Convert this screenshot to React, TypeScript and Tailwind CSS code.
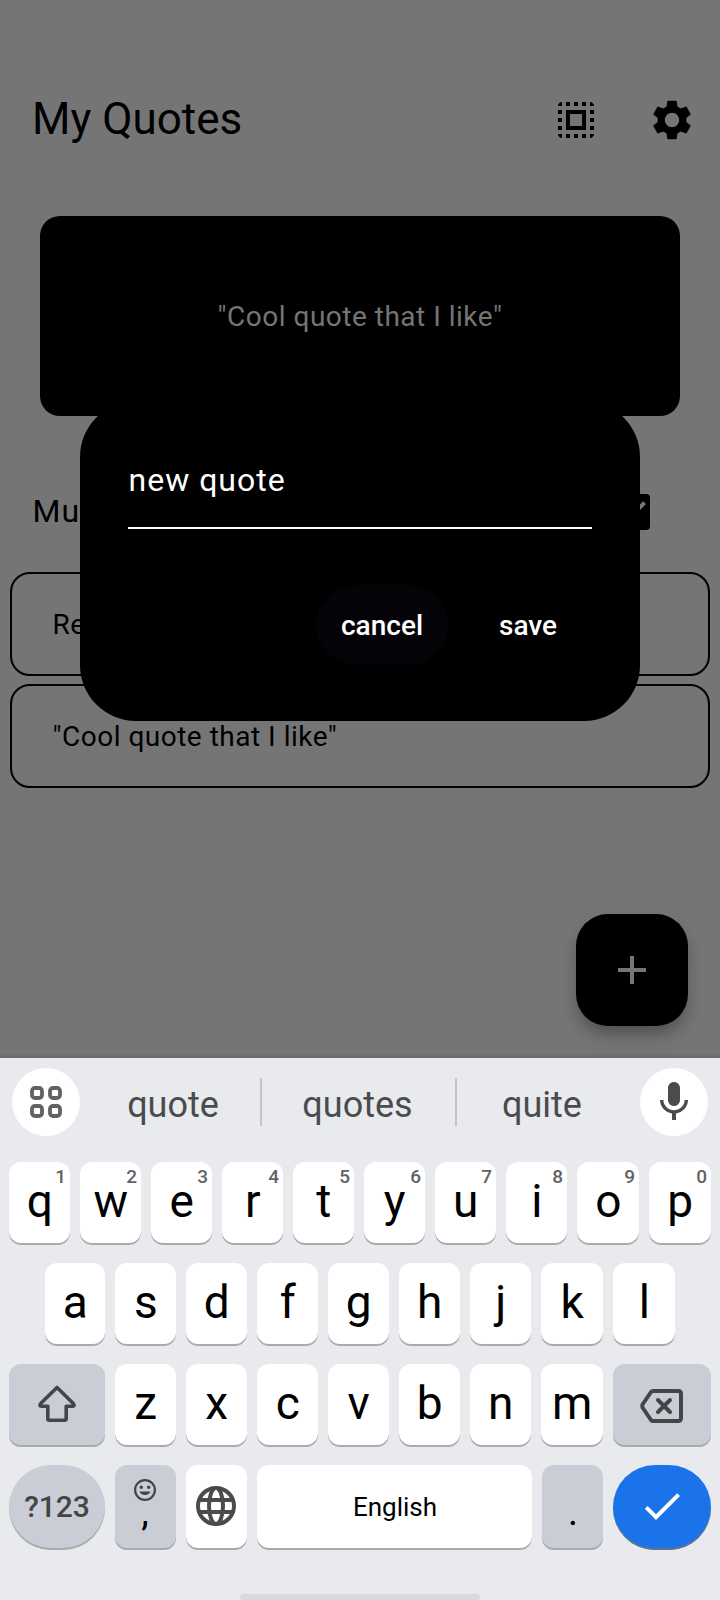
import React from "react";
import { MdAdd, MdCheck, MdCheckBox, MdMic, MdSelectAll, MdSettings } from "react-icons/md";

const KEY = "relative flex shrink-0 justify-center rounded-[12px] shadow-[inset_0_-2px_0_#a9aaad]";

function Key({ label, hint, width = "w-[61px]" }: { label: string; hint?: string; width?: string }) {
  return (
    <div className={`${KEY} ${width} h-[83px] bg-white pl-[0.5px] text-[46px] leading-[78px] text-black`}>
      {label}
      {hint && (
        <span className="absolute right-[4px] top-[5px] text-[19px] font-medium leading-[20px] text-[#626262]">{hint}</span>
      )}
    </div>
  );
}

function ShiftIcon() {
  return (
    <svg width="44" height="43" viewBox="0 0 44 43" fill="none" stroke="#444546" strokeWidth="3.6" strokeLinejoin="round">
      <path d="M22 3.500 L38.300 19.500 Q40.200 22.200 37.500 22.300 H31.200 V34.500 Q31.200 36.200 29.500 36.200 H14.500 Q12.800 36.200 12.800 34.500 V22.300 H6.500 Q3.800 22.200 5.700 19.500 Z" />
    </svg>
  );
}

function BackspaceIcon() {
  return (
    <svg width="48" height="40" viewBox="0 0 48 40" fill="none" stroke="#444546" strokeWidth="4" strokeLinejoin="round">
      <path d="M15 5 H40 Q43 5 43 8 V32 Q43 35 40 35 H15 Q14 35 13 34 L4.500 21.500 Q4 20 4.500 18.500 L13 6 Q14 5 15 5 Z" />
      <path d="M20 14 L32 26 M32 14 L20 26" strokeLinecap="round" />
    </svg>
  );
}

function GridIcon() {
  return (
    <svg width="32" height="32" viewBox="0 0 32 32" fill="none" stroke="#626262" strokeWidth="3.8">
      <rect x="2" y="2" width="10" height="10" rx="3" />
      <rect x="20" y="2" width="10" height="10" rx="3" />
      <rect x="2" y="20" width="10" height="10" rx="3" />
      <rect x="20" y="20" width="10" height="10" rx="3" />
    </svg>
  );
}

function GlobeIcon() {
  return (
    <svg width="40" height="40" viewBox="0 0 40 40" fill="none" stroke="#4a4b4b" strokeWidth="4">
      <circle cx="20" cy="20" r="18" />
      <ellipse cx="20" cy="20" rx="7" ry="18" />
      <path d="M3.500 14 H36.500 M3.500 26 H36.500" />
    </svg>
  );
}

function SmileIcon() {
  return (
    <svg width="22" height="22" viewBox="0 0 22 22" fill="none">
      <circle cx="11" cy="11" r="9.900" stroke="#444546" strokeWidth="2.200" />
      <circle cx="7.300" cy="8.200" r="1.700" fill="#444546" />
      <circle cx="14.700" cy="8.200" r="1.700" fill="#444546" />
      <path d="M5.500 12.500 H16.500 A5.800 5 0 0 1 5.500 12.500 Z" fill="#444546" />
    </svg>
  );
}

const ROW1 = ["q", "w", "e", "r", "t", "y", "u", "i", "o", "p"];
const ROW2 = ["a", "s", "d", "f", "g", "h", "j", "k", "l"];
const ROW3 = ["z", "x", "c", "v", "b", "n", "m"];

function Keyboard() {
  return (
    <div className="relative h-[542px] bg-[#e8eaed]">
      <div className="flex h-[104px] items-start px-3 pt-[10px]">
        <div className="flex h-[68px] w-[68px] items-center justify-center rounded-full bg-white">
          <GridIcon />
        </div>
        <div className="flex h-[68px] flex-1 items-center text-[36px] text-[#4a4b4d]">
          <div className="w-[180px] pl-[6px] pt-[5px] text-center">quote</div>
          <div className="h-12 w-[2px] bg-[#c4c5c8]" />
          <div className="w-[193px] pr-[2px] pt-[5px] text-center">quotes</div>
          <div className="h-12 w-[2px] bg-[#c4c5c8]" />
          <div className="w-[171px] pr-[1px] pt-[5px] text-center">quite</div>
        </div>
        <div className="flex h-[68px] w-[68px] items-center justify-center rounded-full bg-white">
          <MdMic size={48} color="#4a4b4b" />
        </div>
      </div>
      <div className="flex flex-col gap-[18px] px-[9px]">
        <div className="flex gap-[10px]">
          {ROW1.map((k, i) => (
            <Key key={k} label={k} hint={String((i + 1) % 10)} width={i > 7 ? "w-[62px]" : "w-[61px]"} />
          ))}
        </div>
        <div className="flex gap-[10px] pl-9">
          {ROW2.map((k, i) => (
            <Key key={k} label={k} width={i === 0 ? "w-[60px]" : i > 6 ? "w-[62px]" : "w-[61px]"} />
          ))}
        </div>
        <div className="flex gap-[10px]">
          <div className={`${KEY} h-[83px] w-[96px] items-center bg-[#cacdd6]`}>
            <ShiftIcon />
          </div>
          {ROW3.map((k, i) => (
            <Key key={k} label={k} width={i === 6 ? "w-[62px]" : "w-[61px]"} />
          ))}
          <div className={`${KEY} h-[83px] w-[98px] items-center bg-[#cacdd6]`}>
            <BackspaceIcon />
          </div>
        </div>
        <div className="flex gap-[10px]">
          <div className="h-[85px] w-[96px] rounded-[42px] bg-[#cacdd6] text-center text-[30px] font-medium leading-[84px] text-[#444546] shadow-[inset_0_-2px_0_#a9aaad]">
            ?123
          </div>
          <div className="flex h-[85px] w-[61px] flex-col items-center rounded-[12px] bg-[#cacdd6] pr-px pt-[14px] shadow-[inset_0_-2px_0_#a9aaad]">
            <SmileIcon />
            <span className="text-[38px] leading-[22px]">,</span>
          </div>
          <div className={`${KEY} h-[85px] w-[61px] items-center bg-white pb-[3px] pr-px`}>
            <GlobeIcon />
          </div>
          <div className={`${KEY} h-[85px] w-[275px] bg-white pl-px text-[26px] leading-[84px]`}>English</div>
          <div className={`${KEY} h-[85px] w-[61px] bg-[#cacdd6] pl-px text-[38px] leading-[94px]`}>.</div>
          <div className="flex h-[85px] w-[98px] items-center justify-center rounded-[42px] bg-[#1a73e8] pb-[3px] shadow-[inset_0_-2px_0_#5d7594]">
            <MdCheck size={48} color="#fff" />
          </div>
        </div>
      </div>
      <div className="mx-auto mt-[44px] h-[6px] w-[240px] rounded-[3px] bg-[#d7d9dc]" />
    </div>
  );
}

export default function App() {
  return (
    <div className="flex h-[1600px] w-[720px] flex-col overflow-hidden bg-[#757575] font-['Roboto',sans-serif] text-black">
      <div className="relative h-[1058px] overflow-hidden">
        <header className="flex items-center pb-[72px] pl-8 pr-6 pt-24">
          <h1 className="flex-1 pb-[2px] text-[44px] leading-[46px]">My Quotes</h1>
          <MdSelectAll size={48} className="mr-12" />
          <MdSettings size={48} />
        </header>
        <div className="mx-10 h-[200px] rounded-[20px] bg-black text-center text-[28px] leading-[202px] tracking-[0.5px] text-[#757575]">
          "Cool quote that I like"
        </div>
        <div className="mt-[72px] flex h-12 items-center justify-between pl-[32.5px] pr-16 text-[32px] leading-[46px] tracking-[1px]">
          <span className="pb-[2px]">Mu</span>
          <MdCheckBox size={48} />
        </div>
        <div className="mt-9 flex flex-col gap-2 px-[10px] text-[28px] leading-[102px] tracking-[0.5px]">
          <div className="h-[104px] rounded-[20px] border-2 border-black pl-[40.5px]">Re</div>
          <div className="h-[104px] rounded-[20px] border-2 border-black pl-[40.5px]">"Cool quote that I like"</div>
        </div>
        <div className="absolute left-[576px] top-[914px] flex h-28 w-28 items-center justify-center rounded-[32px] bg-black shadow-[0_10px_16px_-2px_rgba(0,0,0,0.32)]">
          <MdAdd size={48} color="#757575" />
        </div>
        <div className="absolute left-20 top-[401px] h-[320px] w-[560px] rounded-[56px] bg-black px-12 pt-[54px] text-white">
          <div className="h-[74px] border-b-2 border-white pl-[0.5px] text-[32px] leading-[51px] tracking-[1px]">new quote</div>
          <div className="mt-14 flex justify-end text-[28px] font-medium leading-[81px]">
            <div className="h-20 w-[132px] rounded-full bg-[#050308] text-center">cancel</div>
            <div className="ml-4 h-20 w-32 text-center">save</div>
          </div>
        </div>
        <div className="absolute bottom-0 left-0 h-[6px] w-full bg-gradient-to-b from-transparent to-black/10" />
      </div>
      <Keyboard />
    </div>
  );
}
